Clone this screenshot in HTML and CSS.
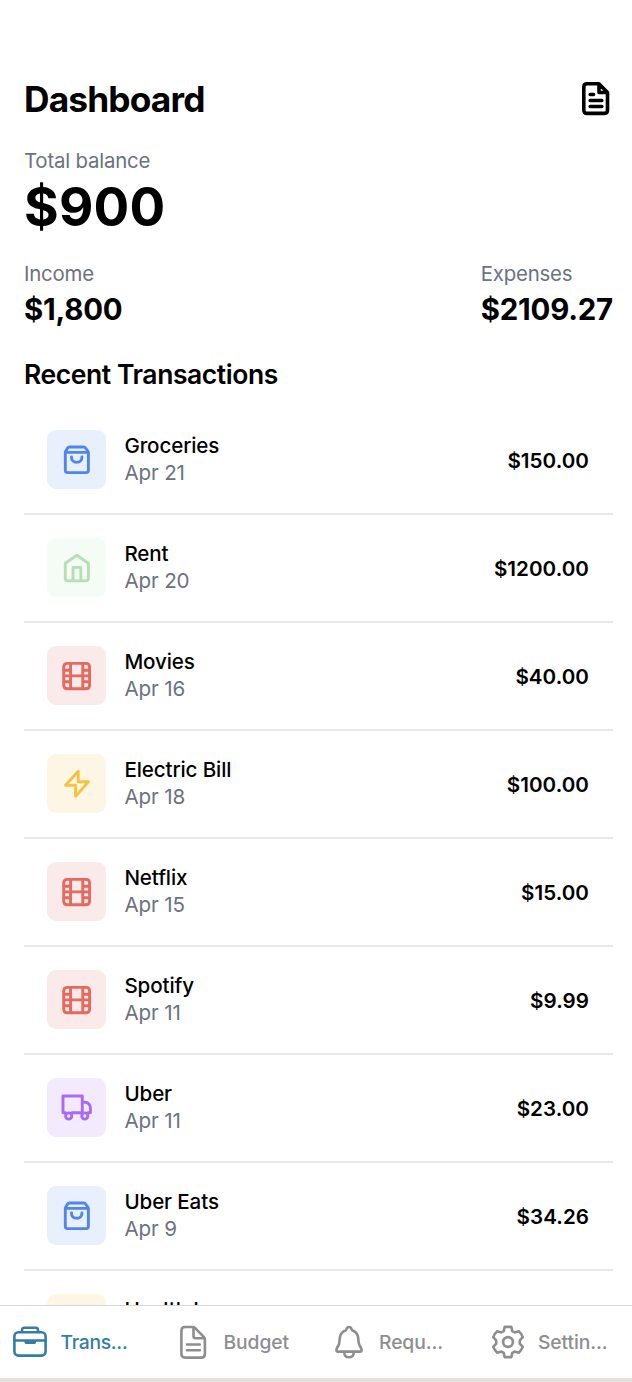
FILE: index.html
```html
<!DOCTYPE html>
<html lang="en">
<head>
<meta charset="utf-8">
<title>Dashboard</title>
<link rel="stylesheet" href="styles.css">
</head>
<body>
<svg class="defs" aria-hidden="true">
  <symbol id="bag" viewBox="0 0 59 59"><path d="M22.3 17h14.4c.8 0 1.5.4 1.9 1l2.8 4v18.3c0 1.400-1 2.300-2.300 2.300H20.600c-1.400 0-2.300-1-2.300-2.300V22l2.300-4c.4-.6 1-1 1.700-1zM18.300 22.400h23.100M24.500 26.900v.5c0 2.900 2.100 4.900 5.200 4.900s5.200-2 5.200-4.900v-.5"/></symbol>
  <symbol id="house" viewBox="0 0 59 59"><path d="M18.300 25.200 29.800 17.300l11.600 7.900v15.100c0 1.400-1.100 2.600-2.600 2.600H20.900c-1.500 0-2.600-1.200-2.600-2.600zM26 42.700V29.400h7.800v13.300"/></symbol>
  <symbol id="film" viewBox="0 0 59 59"><path d="M20.500 17.400h18.300c2.400 0 3.800 1.500 3.800 3.800v17.700c0 2.300-1.400 3.800-3.800 3.800H20.500c-2.300 0-3.800-1.500-3.800-3.800V21.200c0-2.300 1.500-3.800 3.800-3.800zM23.600 17.400v25.300M35.800 17.400v25.300M16.700 29.900h25.900M16.700 24.300h6.900M16.700 35.700h6.900M35.800 24.300h6.800M35.800 35.700h6.800"/></symbol>
  <symbol id="bolt" viewBox="0 0 59 59"><path d="M31.200 17.200 18.500 31.200h10.100v11.200l12.800-14.700H31.200z"/></symbol>
  <symbol id="truck" viewBox="0 0 59 59"><path d="M18.300 34.800h-2.300V18h19.300v16.800H25.200M35.300 24.200h2.900c2.900 0 5.200 3 5.200 5.300v5.300h-2.200"/><circle cx="21.700" cy="38" r="3.100"/><circle cx="37.800" cy="38" r="3.100"/></symbol>
</svg>

<main class="screen">
  <header class="header">
    <h1 class="title">Dashboard</h1>
    <svg class="report" viewBox="0 0 28 34"><path d="M5 1.800h11.900l8.600 8.600v17.900c0 2.100-1.200 3.100-3.100 3.100H5c-2 0-3.200-1.100-3.200-3.100V4.900c0-2 1.200-3.100 3.200-3.100zM17 2v8.500h8.500M8.200 12.500h3.300M8.200 18.500h11.600M8.200 24.500h11.600"/></svg>
  </header>

  <section class="balance">
    <p class="label">Total balance</p>
    <p class="balance-value">$900</p>
  </section>

  <section class="totals">
    <div class="total"><p class="label">Income</p><p class="total-value">$1,800</p></div>
    <div class="total"><p class="label">Expenses</p><p class="total-value">$2109.27</p></div>
  </section>

  <h2 class="subtitle">Recent Transactions</h2>
  <ul class="list">
    <li class="row"><span class="tile blue"><svg><use href="#bag"/></svg></span><div class="info"><p class="name">Groceries</p><p class="date">Apr 21</p></div><span class="amount">$150.00</span></li>
    <li class="row"><span class="tile green"><svg><use href="#house"/></svg></span><div class="info"><p class="name">Rent</p><p class="date">Apr 20</p></div><span class="amount">$1200.00</span></li>
    <li class="row"><span class="tile red"><svg><use href="#film"/></svg></span><div class="info"><p class="name">Movies</p><p class="date">Apr 16</p></div><span class="amount">$40.00</span></li>
    <li class="row"><span class="tile yellow"><svg><use href="#bolt"/></svg></span><div class="info"><p class="name">Electric Bill</p><p class="date">Apr 18</p></div><span class="amount">$100.00</span></li>
    <li class="row"><span class="tile red"><svg><use href="#film"/></svg></span><div class="info"><p class="name">Netflix</p><p class="date">Apr 15</p></div><span class="amount">$15.00</span></li>
    <li class="row"><span class="tile red"><svg><use href="#film"/></svg></span><div class="info"><p class="name">Spotify</p><p class="date">Apr 11</p></div><span class="amount">$9.99</span></li>
    <li class="row"><span class="tile purple"><svg><use href="#truck"/></svg></span><div class="info"><p class="name">Uber</p><p class="date">Apr 11</p></div><span class="amount">$23.00</span></li>
    <li class="row"><span class="tile blue"><svg><use href="#bag"/></svg></span><div class="info"><p class="name">Uber Eats</p><p class="date">Apr 9</p></div><span class="amount">$34.26</span></li>
    <li class="row"><span class="tile yellow"></span><div class="info"><p class="name">Health I</p></div></li>
  </ul>
</main>

<nav class="tabs">
  <a class="tab active"><svg class="tab-icon" viewBox="0 0 34 34"><rect x="1.400" y="7.200" width="31.200" height="23.400" rx="4"/><path d="M9 7V5c0-1.400.8-2.200 2.200-2.200h11.600c1.400 0 2.200.8 2.200 2.200V7M1.400 15.500h31.200"/><path class="solid" d="M11.500 15.200h11.500v2.400c0 .9-.5 1.400-1.400 1.400h-8.700c-.9 0-1.400-.5-1.400-1.400z"/></svg><span>Trans...</span></a>
  <a class="tab"><svg class="tab-icon" viewBox="0 0 34 34"><path d="M9 2h7.700c.9 0 1.700.3 2.300.9l9 9.200c.6.600.9 1.300.9 2.200v14.600c0 2.400-1.300 3.700-3.600 3.700H9c-2.300 0-3.600-1.300-3.600-3.700V5.700C5.400 3.300 6.700 2 9 2zM17.500 2.500v8.600c0 1.400.8 2.200 2.200 2.200h8.600M11 19.500h12.800M11 25.200h12.800"/></svg><span>Budget</span></a>
  <a class="tab"><svg class="tab-icon" viewBox="0 0 34 34"><path d="M27.300 19.800c-1.200-1.700-.4-6.700-1.900-10.100-1.300-2.800-4-4.100-5.400-4.500C19.500 3.500 18.700 2 17 2s-2.500 1.500-3 3.200C12.600 5.600 9.900 6.900 8.600 9.700 7.100 13.100 7.900 18.100 6.700 19.800c-1 1.800-2.300 3.500-2.300 5.200 0 1 .6 1.600 1.500 1.600h22.200c.9 0 1.500-.6 1.500-1.600 0-1.700-1.300-3.400-2.300-5.200zM12.300 27v.8c0 2.900 2 4.500 4.700 4.500s4.700-1.600 4.700-4.500V27"/></svg><span>Requ...</span></a>
  <a class="tab"><svg class="tab-icon" viewBox="0 0 34 34"><path d="M13.700 1.900h6.600l1 4.200 2.300 1.300 4.100-1.100c1.900 1.600 3.200 3.500 4.100 5.800l-3 3.200v3.400l3 3.200c-.9 2.300-2.200 4.200-4.100 5.800l-4.100-1.100-2.300 1.300-1 4.200h-6.600l-1-4.200-2.300-1.300-4.100 1.100c-1.900-1.600-3.200-3.500-4.100-5.800l3-3.200v-3.400l-3-3.200c.9-2.300 2.200-4.200 4.100-5.800l4.100 1.100 2.300-1.300z"/><circle cx="17" cy="17" r="4.900"/></svg><span>Settin...</span></a>
</nav>
</body>
</html>
```
FILE: styles.css
```css
* { box-sizing: border-box; margin: 0; padding: 0; }
body {
  width: 632px;
  height: 1382px;
  overflow: hidden;
  display: flex;
  flex-direction: column;
  background: #fff;
  color: #000;
  font-family: Inter, "Liberation Sans", sans-serif;
}
svg { display: block; fill: none; stroke: currentColor; stroke-linecap: round; stroke-linejoin: round; }
.defs { position: absolute; width: 0; height: 0; }

.screen { flex: none; height: 1305px; overflow: hidden; padding: 77px 19px 0 24px; }
.header { display: flex; justify-content: space-between; padding-right: 3.5px; height: 43px; align-items: center; }
.title { padding-top: 2px; font-size: 35.3px; line-height: 42px; font-weight: 700; letter-spacing: -0.85px; }
.report { width: 28px; height: 34px; stroke-width: 3.6; }

.label { color: #6b7280; font-size: 20.4px; line-height: 29px; letter-spacing: -0.2px; }
.balance { margin-top: 26px; }
.balance-value { padding-top: 2px; font-size: 53px; line-height: 60px; font-weight: 700; letter-spacing: 0.2px; }
.totals { display: flex; justify-content: space-between; margin-top: 22px; }
.total-value { padding-top: 1px; font-size: 29.4px; line-height: 41px; font-weight: 700; letter-spacing: -0.2px; }
.subtitle { margin-top: 25px; font-size: 26.5px; line-height: 38px; font-weight: 600; letter-spacing: -0.43px; }

.list { list-style: none; margin-top: 14px; }
.row { display: flex; align-items: flex-start; width: 589px; height: 108px; padding: 23px 24px 0 23.400px; border-bottom: 2px solid #e9e9eb; }
.tile { flex: none; width: 59px; height: 59px; border-radius: 9px; }
.tile svg { width: 59px; height: 59px; stroke-width: 2.9; }
.blue { background: #e8effd; color: #4f86ee; }
.green { background: #f5fbf5; color: #b6e0b4; }
.red { background: #fbeaea; color: #e4695e; }
.yellow { background: #fef6e5; color: #f6c244; }
.purple { background: #f4eafe; color: #a76bf5; }
.info { flex: 1; margin: 2px 0 0 18px; }
.name, .date { font-size: 20.6px; line-height: 27px; }
.name { font-weight: 500; letter-spacing: -0.12px; }
.date { color: #6b7280; letter-spacing: -0.15px; }
.amount { line-height: 61px; font-size: 20.6px; font-weight: 600; letter-spacing: 0.05px; }

.tabs {
  flex: none;
  display: grid;
  grid-template-columns: 163px 155.5px 159px 1fr;
  height: 77px;
  padding-left: 13px;
  border-top: 1.5px solid #d8d8d8;
  border-bottom: 4px solid #e7e1dd;
  color: #8e8e8e;
}
.tab { display: flex; align-items: center; gap: 13.500px; font-size: 19.3px; font-weight: 500; line-height: 26px; letter-spacing: -0.1px; }
.active { color: #367da5; letter-spacing: -0.3px; }
.tab-icon { width: 34px; height: 34px; stroke-width: 2.6; }
.solid { fill: currentColor; stroke: none; }
```
